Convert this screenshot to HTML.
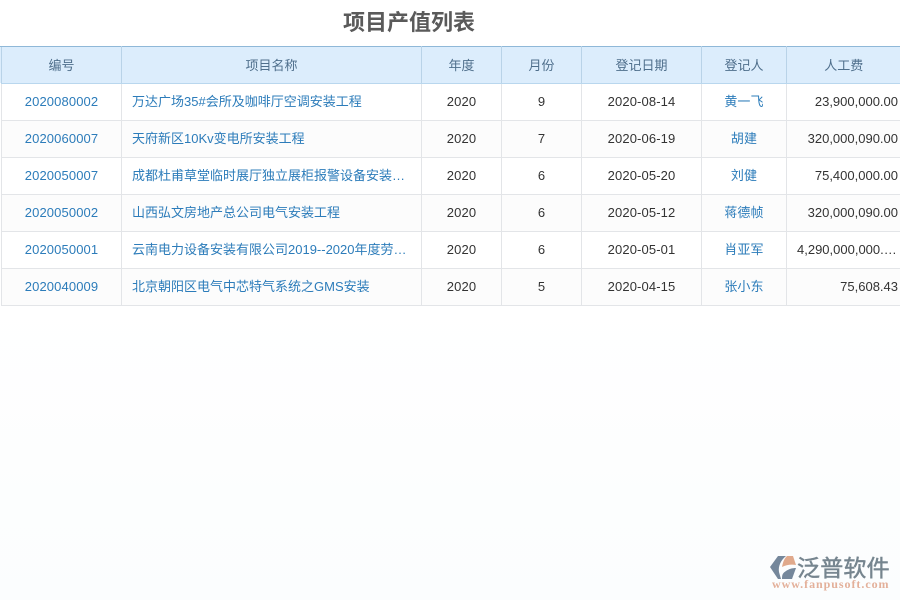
<!DOCTYPE html>
<html lang="zh-CN">
<head>
<meta charset="utf-8">
<title>项目产值列表</title>
<style>
html,body{margin:0;padding:0}
body{width:900px;height:600px;overflow:hidden;position:relative;background:linear-gradient(#ffffff 0,#ffffff 300px,#fbfdfe 600px);font-family:"Liberation Sans","Noto Sans CJK SC",sans-serif;font-size:13px}
.title{position:absolute;left:343px;top:8px;font-size:22px;line-height:30px;font-weight:bold;color:#5a5a5a;white-space:nowrap}
.edge{position:absolute;left:0;top:46px;width:2px;height:37px;background:#dcedfc;border-top:1px solid #8fb8d8;box-sizing:border-box}
table{position:absolute;left:1px;top:46px;border-collapse:collapse;table-layout:fixed;width:899px}
th,td{box-sizing:border-box;border:1px solid #e3e5e8;border-top:0;padding:0;text-align:center;white-space:nowrap;overflow:hidden;text-overflow:ellipsis;font-weight:normal}
thead tr{height:37px}
th{background:#dcedfc;color:#4f6f8c;border-right:1px solid #b9d3e8;border-bottom:1px solid #b9d7ee;border-left:1px solid #b9d3e8;border-top:1px solid #8fb8d8;height:37px;line-height:33px}
td:first-child{border-left-color:#e3e5e8}
tbody tr{height:37px}
td{height:37px;color:#333;line-height:34px;background:#fff;letter-spacing:.12px}
tbody tr:nth-child(even) td{background:#fcfcfc}
td.l{color:#2c7cba}
td.n{text-align:left;padding:0 13px 0 10px;color:#2c7cba;letter-spacing:0}
td.r{text-align:right;padding-right:2.5px;letter-spacing:0}
th:last-child,td:last-child{border-right:0}
.logo{position:absolute;left:769px;top:553px;width:128px;height:44px}
.cn{position:absolute;left:28px;top:1px;font-size:23px;line-height:29px;color:#76858f;font-weight:normal;-webkit-text-stroke:.5px #76858f;white-space:nowrap;letter-spacing:.2px}
.url{position:absolute;left:3px;top:25px;font-family:"Liberation Serif","Noto Serif CJK SC",serif;font-size:12px;line-height:13px;font-weight:bold;letter-spacing:.95px;color:#e3b09a;white-space:nowrap}
</style>
</head>
<body>
<div class="title">项目产值列表</div>
<div class="edge"></div>
<table>
<colgroup><col style="width:120px"><col style="width:300px"><col style="width:80px"><col style="width:80px"><col style="width:120px"><col style="width:85px"><col style="width:114px"></colgroup>
<thead><tr><th>编号</th><th>项目名称</th><th>年度</th><th>月份</th><th>登记日期</th><th>登记人</th><th>人工费</th></tr></thead>
<tbody>
<tr><td class="l">2020080002</td><td class="n">万达广场35#会所及咖啡厅空调安装工程</td><td>2020</td><td>9</td><td>2020-08-14</td><td class="l">黄一飞</td><td class="r">23,900,000.00</td></tr>
<tr><td class="l">2020060007</td><td class="n">天府新区10Kv变电所安装工程</td><td>2020</td><td>7</td><td>2020-06-19</td><td class="l">胡建</td><td class="r">320,000,090.00</td></tr>
<tr><td class="l">2020050007</td><td class="n">成都杜甫草堂临时展厅独立展柜报警设备安装工程</td><td>2020</td><td>6</td><td>2020-05-20</td><td class="l">刘健</td><td class="r">75,400,000.00</td></tr>
<tr><td class="l">2020050002</td><td class="n">山西弘文房地产总公司电气安装工程</td><td>2020</td><td>6</td><td>2020-05-12</td><td class="l">蒋德帧</td><td class="r">320,000,090.00</td></tr>
<tr><td class="l">2020050001</td><td class="n">云南电力设备安装有限公司2019--2020年度劳务分包工程</td><td>2020</td><td>6</td><td>2020-05-01</td><td class="l">肖亚军</td><td style="text-align:left;padding-left:10px;letter-spacing:0;text-overflow:clip">4,290,000,000.…</td></tr>
<tr><td class="l">2020040009</td><td class="n">北京朝阳区电气中芯特气系统之GMS安装</td><td>2020</td><td>5</td><td>2020-04-15</td><td class="l">张小东</td><td class="r">75,608.43</td></tr>
</tbody>
</table>
<div class="logo">
<svg width="30" height="28" viewBox="0 0 30 28" style="position:absolute;left:0;top:0">
<path d="M9 3 L17 3 C12 7 9 13 10 19 L12 26 L9 26 L1 14 Z" fill="#75879b"/>
<path d="M13 14 C14 9 15 6 18 3 L24 3 L27 12 C22 11 17 12 13 14 Z" fill="#e0a98c"/>
<path d="M13 26 C13 21 14 20 17 18 C20 16 23 15 27 15 L23 26 Z" fill="#75879b"/>
</svg>
<div class="cn">泛普软件</div>
<div class="url">www.fanpusoft.com</div>
</div>
</body>
</html>
